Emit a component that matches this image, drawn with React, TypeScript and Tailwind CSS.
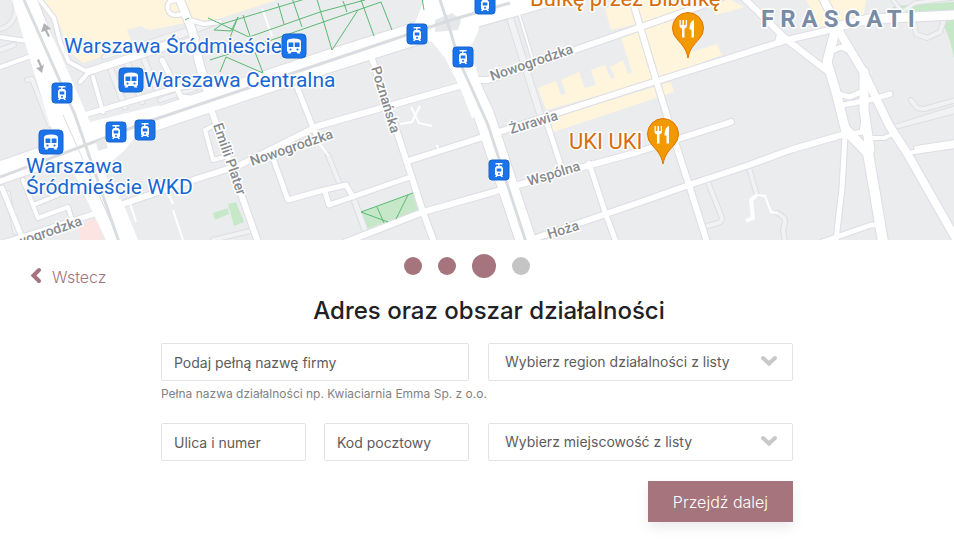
import React from "react";

type Road = { d: string; w: number };

const lanes: Road[] = [
  { d: "M27 80 32 79 50 125", w: 4 },
  { d: "M110 67 125 107M127 62 142 102M143 57 156 88", w: 5 },
  { d: "M160 100 196 88M104 57 200 26M150 48 212 24", w: 4 },
  { d: "M8 193 15 232", w: 4 },
  { d: "M213 240 250 231", w: 4 },
  { d: "M510 18 541 117", w: 6 },
  { d: "M353 197 365 230", w: 5 },
  { d: "M328 155 340 185", w: 4 },
  { d: "M708 182 722 218Q722 222 718 223L704 227", w: 4 },
  { d: "M749 168 757 195M777 213Q786 217 785 222L783 230 785 242", w: 4 },
  { d: "M911 100 917 108 924 109 956 100M901 125 956 108M894 127 956 111", w: 4 },
  { d: "M0 29Q12 27 16 12L15 0M0 50 14 45", w: 4 },
  { d: "M914 22 916 34 927 38 940 32 944 20", w: 4 },
  { d: "M893 0 902 12 915 3 954 -2", w: 3 },
];

const streets: Road[] = [
  { d: "M0 67 34 55M0 37 27 41", w: 4 },
  { d: "M40 0 54 18 60 42 69 62 86 71 128 57 176 40", w: 4 },
  { d: "M80 82 88 73 197 38", w: 4 },
  { d: "M87 114 180 87 215 84", w: 5 },
  { d: "M93 77 103 112", w: 4 },
  { d: "M162 60 181 97 190 98", w: 5 },
  { d: "M179 -2 192 30 199 62 209 96", w: 8 },
  { d: "M190 20 204 24 220 22", w: 4 },
  { d: "M180 0Q165 -1 168 10 170 17 182 14", w: 4 },
  { d: "M297 87 312 125 317 136", w: 5 },
  { d: "M23 180 38 218 68 207 72 220M33 205 58 195", w: 4 },
  { d: "M2 188 23 240M0 244 94 214", w: 5 },
  { d: "M123 204 187 182 240 165 318 126 463 85", w: 6 },
  { d: "M212 112 258 242", w: 6 },
  { d: "M213 126 205 130 213 160 228 156", w: 4 },
  { d: "M273 158 288 200 320 191 346 185 353 197M325 192 329 205 410 177", w: 5 },
  { d: "M371 56 398 135 423 212 434 242", w: 6 },
  { d: "M408 161 480 138 638 87 787 40 834 29", w: 6 },
  { d: "M346 242 423 212 518 185 638 152 731 122", w: 6 },
  { d: "M530 240 638 203 689 185 749 165 790 150 845 134", w: 6 },
  { d: "M478 80 488 80 638 28 698 7 725 -4", w: 6 },
  { d: "M516 4 532 57", w: 2 },
  { d: "M545 117 560 163M589 163 605 212 616 242", w: 5 },
  { d: "M631 -4 656 80 677 148 689 185 707 242", w: 6 },
  { d: "M742 -4 787 40 826 70M780 34 778 43", w: 6 },
  { d: "M822 -4 840 33 864 73 889 125 907 153 956 239", w: 8 },
  { d: "M836 28 827 62 836 92 846 132", w: 9 },
  { d: "M864 72 864 110 870 150", w: 9 },
  { d: "M832 51 841 47 850 51M838 94 850 97 863 91M843 105 874 99 890 94", w: 5 },
  { d: "M846 130 868 153 876 200 883 242", w: 10 },
  { d: "M864 120 862 132 851 134", w: 5 },
  { d: "M845 136 842 188 836 240M822 242 871 225 880 225", w: 5 },
  { d: "M870 138 884 138 895 133M907 153 956 146M916 148 956 142", w: 4 },
  { d: "M834 27 870 19 956 15", w: 9 },
];

const avenues: Road[] = [
  { d: "M24 -4 70 115 122 244", w: 22 },
  { d: "M-4 174 147 122 320 64 440 26 560 -8", w: 22 },
  { d: "M440 -4 454 50 484 115 527 244", w: 20 },
];

const footpaths =
  "M208 18 249 37 320 12 365 0M214 30 231 31 238 17 229 40M214 30 222 24 315 -4M243 15 250 36M278 3 284 24M292 -2 302 27M210 60 260 44 381 2 392 30M226 57 220 72M226 57 263 73 255 52M316 -4 332 50 358 10M361 0 374 36M343 1 347 12M422 -2 424 10M185 20 189 18";

function Roads({ roads, casing }: { roads: Road[]; casing: string }) {
  return (
    <g fill="none" stroke={casing} strokeLinejoin="round" strokeLinecap="round">
      {roads.map((r) => (
        <path key={r.d} d={r.d} strokeWidth={r.w + 2} />
      ))}
    </g>
  );
}

function RoadFill({ roads, color }: { roads: Road[]; color: string }) {
  return (
    <g fill="none" stroke={color} strokeLinejoin="round" strokeLinecap="round">
      {roads.map((r) => (
        <path key={r.d} d={r.d} strokeWidth={r.w} />
      ))}
    </g>
  );
}

function Train({ x, y }: { x: number; y: number }) {
  return (
    <g transform={`translate(${x} ${y})`}>
      <rect width="24" height="24" rx="4" fill="#1a73e8" stroke="#1765cc" />
      <path d="M5 7.500Q5 4.500 12 4.500T19 7.500V16.500Q19 18 17.500 18L18.500 19.500H15.500L14.500 18H9.500L8.500 19.500H5.500L6.500 18Q5 18 5 16.500Z" fill="#fff" />
      <path d="M6.500 8.500H11.300V13H6.500ZM12.700 8.500H17.500V13H12.700Z" fill="#1a73e8" />
      <circle cx="8.500" cy="15.500" r="1.100" fill="#1a73e8" />
      <circle cx="15.500" cy="15.500" r="1.100" fill="#1a73e8" />
    </g>
  );
}

function Tram({ x, y }: { x: number; y: number }) {
  return (
    <g transform={`translate(${x} ${y})`}>
      <rect width="20" height="20" rx="3" fill="#1a73e8" stroke="#1765cc" />
      <path d="M6.500 3H13.500V4.500H10.800L10.300 6H12.500L14 8V14.500L13 15.500L14 17H12.300L11.500 16H8.500L7.700 17H6L7 15.500L6 14.500V8L7.500 6H9L9.300 4.500H6.500Z" fill="#fff" />
      <path d="M7.700 8.500H12.300V11.500H7.700Z" fill="#1a73e8" />
      <circle cx="10" cy="13.700" r="1" fill="#1a73e8" />
    </g>
  );
}

function FoodPin({ x, y }: { x: number; y: number }) {
  return (
    <g transform={`translate(${x} ${y})`}>
      <path d="M0 46C-2 36-6 33-11 27A15.500 15.500 0 1 1 11 27C6 33 2 36 0 46Z" fill="#f29900" stroke="#e37400" />
      <path d="M-8.500 8V13Q-8.500 16-6 16.500V25.500H-3.500V16.500Q-1 16-1 13V8H-2.300V13H-4V8H-5.600V13H-7.200V8Z" fill="#fff" />
      <path d="M6 8Q1.500 9 1.500 17.500H3.500V25.500H6Z" fill="#fff" />
    </g>
  );
}

const streetNames: { name: string; x: number; y: number; angle: number }[] = [
  { name: "Nowogrodzka", x: 252, y: 166, angle: -19 },
  { name: "Nowogrodzka", x: 492, y: 81, angle: -19 },
  { name: "Nowogrodzka", x: 1, y: 253, angle: -19 },
  { name: "Poznańska", x: 371, y: 68, angle: 73 },
  { name: "Emilii Plater", x: 213, y: 125, angle: 71 },
  { name: "Żurawia", x: 511, y: 134, angle: -17 },
  { name: "Wspólna", x: 529, y: 186, angle: -17 },
  { name: "Hoża", x: 549, y: 239, angle: -17 },
];

function CityMap() {
  return (
    <svg
      role="img"
      aria-label="Mapa Warszawy"
      viewBox="0 0 954 240"
      preserveAspectRatio="xMidYMid slice"
      className="block h-60 w-full bg-[#ebecee] font-[Roboto,sans-serif]"
    >
      <rect width="954" height="240" fill="#ebecee" />
      <g fill="#fef5dc">
        <path d="M42 0H277L215 20 190 22 150 30 140 26 127 30 132 42 105 55 83 63 68 50 60 25Z" />
        <path d="M538 88 556 81 561 95 566 94 561 80 579 72 585 88 596 85 591 70 605 65 611 79 615 77 610 67 623 60 628 74 632 72 621 38 641 28 672 18 692 52 717 44 722 55 656 80 546 110Z" />
        <path d="M551 118 671 82 674 92 605 115 553 132Z" />
        <path d="M605 9 630 0H731L744 7 716 15 714 6 611 30Z" />
        <path d="M806 0H866L864 14 820 27Z" />
      </g>
      <g fill="#c6e8c9">
        <path d="M895 6 954 2V11L880 15Z" />
        <path d="M944 20H954V58Q950 38 944 26Z" />
        <path d="M361 212 413 193 418 210 367 229Z" />
        <path d="M213 213 228 208 229 214 215 220ZM228 204 236 202 244 222 234 226Z" />
      </g>
      <path d="M78 225 97 218 103 240H80Z" fill="#fce4e3" />

      <Roads roads={lanes} casing="#dcdee1" />
      <RoadFill roads={lanes} color="#f1f2f4" />
      <Roads roads={streets} casing="#dddde4" />
      <Roads roads={avenues} casing="#dddde4" />
      <RoadFill roads={streets} color="#fff" />
      <RoadFill roads={avenues} color="#fff" />
      <g fill="#fff">
        <path d="M12 0H36L62 58 90 122 160 105 125 150 102 170 123 203 138 240H106L67 158 50 125Z" />
        <path d="M424 0H482L480 18 478 32 470 48 478 75 490 112 472 118 460 88 445 58 432 42 408 40Z" />
      </g>
      <path d="M435 20 452 13 461 20 458 30 435 32Z" fill="#e6e8ea" />
      <g fill="none" stroke="#fff" strokeWidth="2">
        <path d="M757 195 751 200 753 218 746 221" strokeWidth="4" strokeLinejoin="round" />
        <path d="M757 195 765 196 771 212 777 213" />
        <path d="M318 142 328 155M130 203 136 222M168 193 173 204M173 210 183 240M262 8 272 36" />
        <path d="M400 124 412 122 420 106M411 107 419 123 432 126M437 145 439 152" />
      </g>
      <g fill="none" stroke="#dadde0">
        <path d="M24 0 75 115 119 242" strokeWidth="3" />
        <path d="M63 115 120 242" strokeWidth="1" />
        <path d="M0 177 147 122 320 64 451 20 510 3" strokeWidth="3" />
        <path d="M440 0 451 33 458 58 488 125 526 242" strokeWidth="3" />
      </g>
      <path d="M96 142 104 138 108 148 98 151Z" fill="#e6e8ea" />
      <path d={footpaths} fill="none" stroke="#5bb974" />
      <path d="M361 212 413 193M361 212 388 222M377 207 384 223M408 195 396 219" fill="none" stroke="#5bb974" />
      <g fill="#b0b2b5">
        <path d="M44 23 41 32 45 31 48 37 50 36 47 30 51 29Z" />
        <path d="M37 60 40 67 36 68 42 73 44 64 42 66 39 59Z" />
      </g>

      <g fill="#868a8e" stroke="#fff" strokeWidth="3" strokeLinejoin="round" paintOrder="stroke" fontSize="14" fontWeight="500">
        {streetNames.map((s) => (
          <text key={s.name + s.x} transform={`translate(${s.x} ${s.y}) rotate(${s.angle})`}>
            {s.name}
          </text>
        ))}
      </g>

      <g fill="#1967d2" stroke="#fff" strokeWidth="3" strokeLinejoin="round" paintOrder="stroke" fontSize="21">
        <text x="64" y="53">Warszawa Śródmieście</text>
        <text x="144" y="87">Warszawa Centralna</text>
        <text x="26" y="173">Warszawa</text>
        <text x="26" y="194">Śródmieście WKD</text>
      </g>
      <g fill="#d56e0c" stroke="#fff" strokeWidth="3" strokeLinejoin="round" paintOrder="stroke" fontSize="22">
        <text x="530" y="6">Bułkę przez Bibułkę</text>
        <text x="569" y="149">UKI UKI</text>
      </g>
      <text x="761" y="27" fontSize="24" fontWeight="700" fill="#7a8ba5" stroke="#fff" strokeWidth="3" strokeLinejoin="round" paintOrder="stroke" className="tracking-[6px]">
        FRASCATI
      </text>

      <Train x={282} y={34} />
      <Train x={119} y={68} />
      <Train x={39} y={130} />
      <Tram x={52} y={83} />
      <Tram x={106} y={122} />
      <Tram x={135} y={120} />
      <Tram x={407} y={24} />
      <Tram x={453} y={47} />
      <Tram x={475} y={-6} />
      <Tram x={489} y={160} />
      <FoodPin x={688} y={12} />
      <FoodPin x={663} y={118} />
    </svg>
  );
}

function TextField({ label }: { label: string }) {
  return (
    <input
      type="text"
      aria-label={label}
      placeholder={label}
      className="h-[38px] w-full min-w-0 rounded-xs border border-[#e3e3e3] bg-white px-3 text-sm text-[#5c5c5c] outline-none placeholder:text-[#5c5c5c] focus:border-[#a5747d]"
    />
  );
}

function SelectField({ label }: { label: string }) {
  return (
    <div className="relative min-w-0">
      <select
        aria-label={label}
        className="h-[38px] w-full appearance-none rounded-xs border border-[#e3e3e3] bg-white pr-12 pl-4 text-sm text-[#5c5c5c] outline-none focus:border-[#a5747d]"
      >
        <option>{label}</option>
      </select>
      <svg viewBox="0 0 16 12" aria-hidden="true" className="pointer-events-none absolute top-3 right-4 h-3 w-4">
        <path d="M2 3 8 8.500 14 3" fill="none" stroke="#c8c8c8" strokeWidth="4" strokeLinecap="round" />
      </svg>
    </div>
  );
}

export default function App() {
  return (
    <div className="min-h-screen bg-white font-[Inter,sans-serif]">
      <CityMap />
      <main>
        <div className="grid grid-cols-[1fr_auto_1fr] items-start pr-5">
          <a href="#wstecz" className="mt-[25px] ml-[30px] flex items-center gap-2.5 text-base font-light text-[#a5747d]">
            <svg viewBox="0 0 12 20" aria-hidden="true" className="h-5 w-3">
              <path d="M9 3 3.500 8.500 9 14" fill="none" stroke="#a5747d" strokeWidth="4" strokeLinecap="round" />
            </svg>
            Wstecz
          </a>
          <ol aria-label="Postęp" className="mt-3.5 flex items-center gap-4">
            <li className="size-[18px] rounded-full bg-[#a5747d]" />
            <li className="size-[18px] rounded-full bg-[#a5747d]" />
            <li className="size-6 rounded-full bg-[#a5747d]" />
            <li className="size-[18px] rounded-full bg-[#c4c4c4]" />
          </ol>
        </div>
        <form className="mx-auto max-w-[632px]" onSubmit={(e) => e.preventDefault()}>
          <h1 className="mt-1.5 pl-6 text-center text-2xl font-medium text-[#202124]">Adres oraz obszar działalności</h1>
          <div className="mt-4 grid grid-cols-[308fr_305fr] gap-x-[19px] gap-y-5">
            <div className="min-w-0">
              <TextField label="Podaj pełną nazwę firmy" />
              <p className="mt-1 text-xs leading-[18px] whitespace-nowrap text-[#828282]">
                Pełna nazwa działalności np. Kwiaciarnia Emma Sp. z o.o.
              </p>
            </div>
            <SelectField label="Wybierz region działalności z listy" />
            <div className="grid min-w-0 grid-cols-2 gap-x-[18px]">
              <TextField label="Ulica i numer" />
              <TextField label="Kod pocztowy" />
            </div>
            <SelectField label="Wybierz miejscowość z listy" />
          </div>
          <div className="mt-5 flex justify-end">
            <button type="submit" className="h-[41px] w-[145px] bg-[#a5747d] text-base font-light text-white shadow-[0_6px_12px_rgba(0,0,0,0.08)]">
              Przejdź dalej
            </button>
          </div>
        </form>
      </main>
    </div>
  );
}
